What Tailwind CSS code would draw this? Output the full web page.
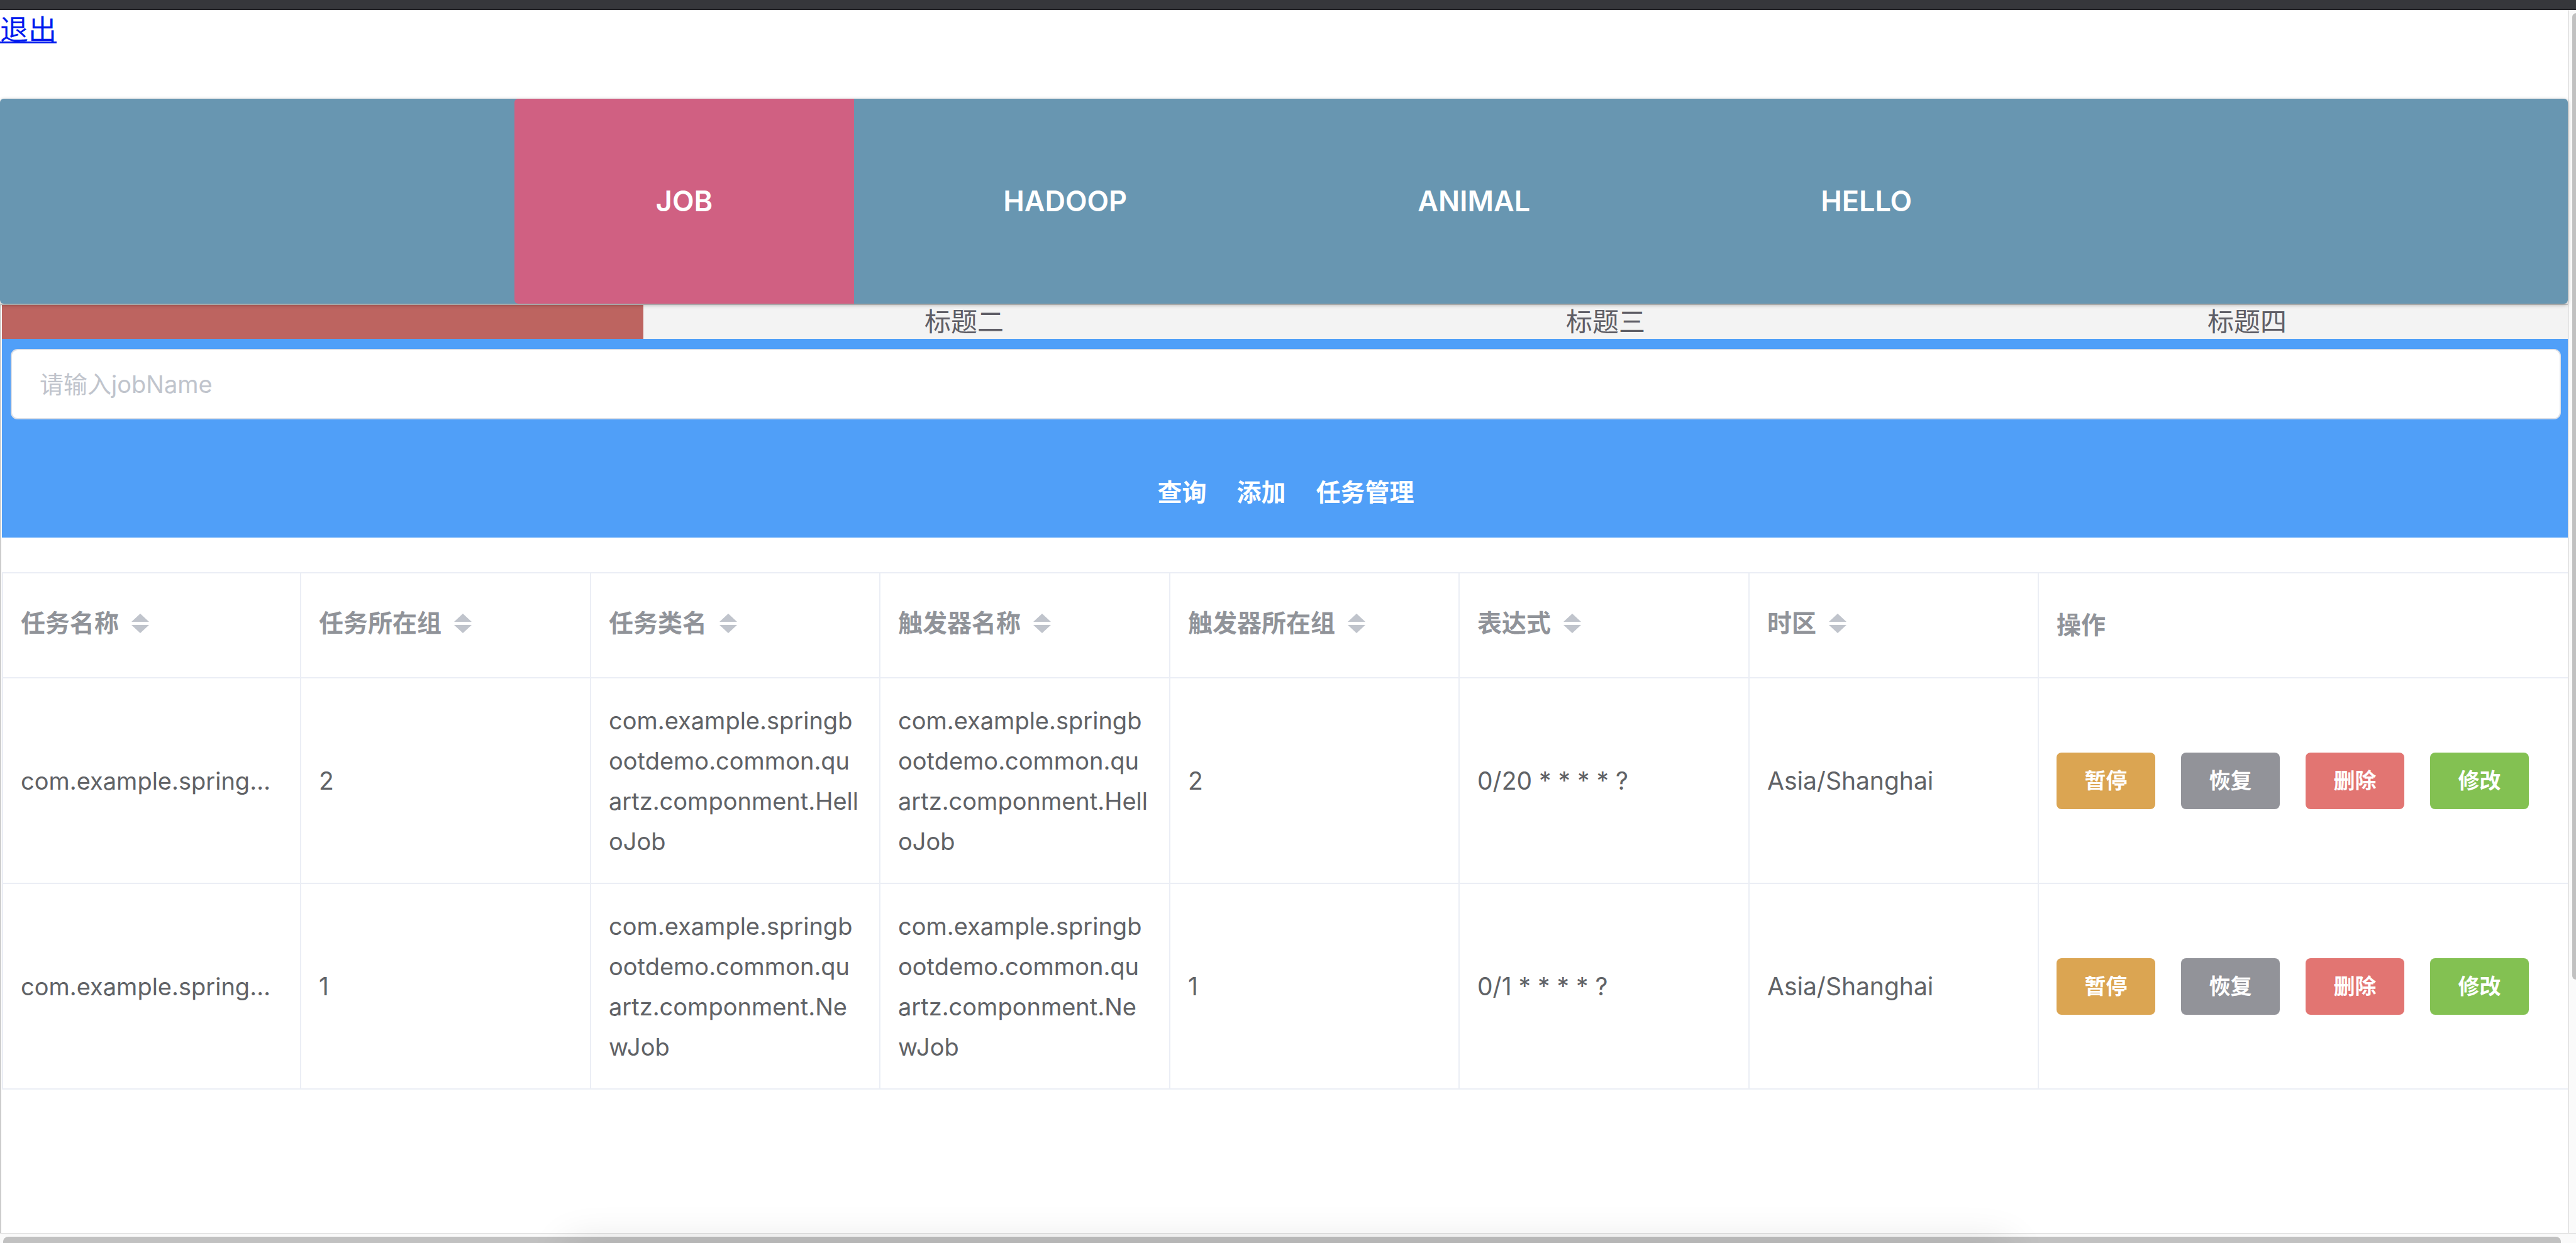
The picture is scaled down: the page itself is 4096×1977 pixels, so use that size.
<!DOCTYPE html>
<html lang="zh-CN">
<head>
<meta charset="utf-8">
<title>任务管理</title>
<script src="https://cdn.jsdelivr.net/npm/@tailwindcss/browser@4"></script>
</head>
<body class="relative h-screen overflow-hidden bg-white font-[Inter,'Noto_Sans_CJK_SC',sans-serif] text-[39px] text-[#606266]">
<div class="flex h-full flex-col">
  <div class="h-4 shrink-0 border-b-2 border-[#232327] bg-[#36373b]"></div>
  <div class="flex min-h-0 flex-1">
    <div class="flex min-w-0 flex-1 flex-col">
      <div class="h-[141px] shrink-0 pt-1">
        <a href="#" class="text-[45px] leading-[56px] text-[#0019ee] underline decoration-[3px] underline-offset-2">退出</a>
      </div>
      <nav class="relative z-10 flex h-[326px] shrink-0 justify-center gap-3 rounded-md bg-[#6896b1] text-[45px] font-semibold text-white shadow-[0_2px_6px_rgba(0,0,0,0.3)]">
        <a href="#" class="flex items-center rounded-l-md bg-[#d06082] px-[225px]">JOB</a>
        <a href="#" class="flex items-center px-[225px]">HADOOP</a>
        <a href="#" class="flex items-center px-[225px]">ANIMAL</a>
        <a href="#" class="flex items-center px-[225px]">HELLO</a>
      </nav>
      <main class="min-h-0 flex-1 border-t-2 border-l-2 border-[#cccccc] pl-px">
        <div class="grid h-[54px] grid-cols-4 bg-[#f3f3f3] text-center text-[42px] leading-[54px] text-[#5f5e66]">
          <a href="#" aria-label="标题一" class="bg-[#bd6460]"></a>
          <a href="#">标题二</a>
          <a href="#">标题三</a>
          <a href="#">标题四</a>
        </div>
        <form class="h-[316px] bg-[#509ff8] pt-4 pr-[11px] pl-[14px]">
          <input type="text" aria-label="jobName" placeholder="请输入jobName" class="block h-[112px] w-full rounded-[11px] border-2 border-[#dcdfe6] bg-white px-11 text-[38px] outline-none placeholder:text-[#c0c4cc]">
          <div class="flex justify-center gap-12 pt-[88px] font-bold leading-[56px] text-white">
            <button type="button">查询</button>
            <button type="button">添加</button>
            <button type="button">任务管理</button>
          </div>
        </form>
        <table class="mt-[55px] w-full table-fixed border-separate border-spacing-0 border-t-2 border-l-2 border-[#ebeef5] text-left">
          <colgroup>
            <col class="w-[474px]"><col class="w-[461px]"><col class="w-[460px]"><col class="w-[461px]"><col class="w-[460px]"><col class="w-[461px]"><col class="w-[460px]"><col>
          </colgroup>
          <thead class="text-[#909399]">
            <tr id="head"></tr>
          </thead>
          <tbody id="rows" class="leading-[64px]"></tbody>
        </table>
      </main>
    </div>
    <div class="w-[13px] shrink-0 border-l-2 border-[#e5e5e5] bg-[#fafafa] pt-[5px] pl-[5px]">
      <div class="h-[1537px] rounded-l-lg bg-[#c1c1c1]"></div>
    </div>
  </div>
  <div class="h-4 shrink-0 border-t-2 border-[#e5e5e5] bg-[#fafafa] pt-1 pr-6 pl-[5px]">
    <div class="h-full rounded-t-lg bg-[#c1c1c1]"></div>
  </div>
</div>
<!-- shadow cast by the dock below the window -->
<div class="pointer-events-none absolute top-full right-[22%] left-[22%] h-20 shadow-[0_0_64px_rgba(0,0,0,0.12)]"></div>
<script>
  const sort = '<svg aria-hidden="true" viewBox="0 0 28 31" class="h-[31px] w-7 fill-[#c0c4cc]"><path d="M14 0 28 13H0zM0 18H28L14 31z"/></svg>';
  const heads = ['任务名称', '任务所在组', '任务类名', '触发器名称', '触发器所在组', '表达式', '时区'];
  document.getElementById('head').innerHTML = heads.map(h =>
    `<th class="h-[167px] border-r-2 border-b-2 border-[#ebeef5] px-7 pb-1.5 font-bold"><span class="flex items-center gap-5">${h}${sort}</span></th>`
  ).join('') + '<th class="h-[167px] border-b-2 border-[#ebeef5] px-7 font-bold">操作</th>';
  const rows = [
    ['com.example.springbootdemo.common.quartz.componment.HelloJob', '2', '0/20 * * * * ?'],
    ['com.example.springbootdemo.common.quartz.componment.NewJob', '1', '0/1 * * * * ?']
  ];
  const btn = (t, c) => `<button type="button" class="h-[90px] w-[157px] rounded-lg text-[34px] font-bold text-white ${c}">${t}</button>`;
  const td = (t, size = 'text-[39px]') => `<td class="h-[327px] border-r-2 border-b-2 border-[#ebeef5] px-7 break-all last:border-r-0 ${size}">${t}</td>`;
  document.getElementById('rows').innerHTML = rows.map(([cls, g, cron]) => '<tr>' +
    td(cls.slice(0, 18) + '…', 'text-[38px]') + td(g) + td(cls, 'text-[38px]') + td(cls, 'text-[38px]') + td(g) + td(cron) + td('Asia/Shanghai') +
    td(`<div class="flex gap-[41px]">${btn('暂停', 'bg-[#dba552]')}${btn('恢复', 'bg-[#929399]')}${btn('删除', 'bg-[#e27572]')}${btn('修改', 'bg-[#83c152]')}</div>`) +
    '</tr>').join('');
</script>
</body>
</html>
